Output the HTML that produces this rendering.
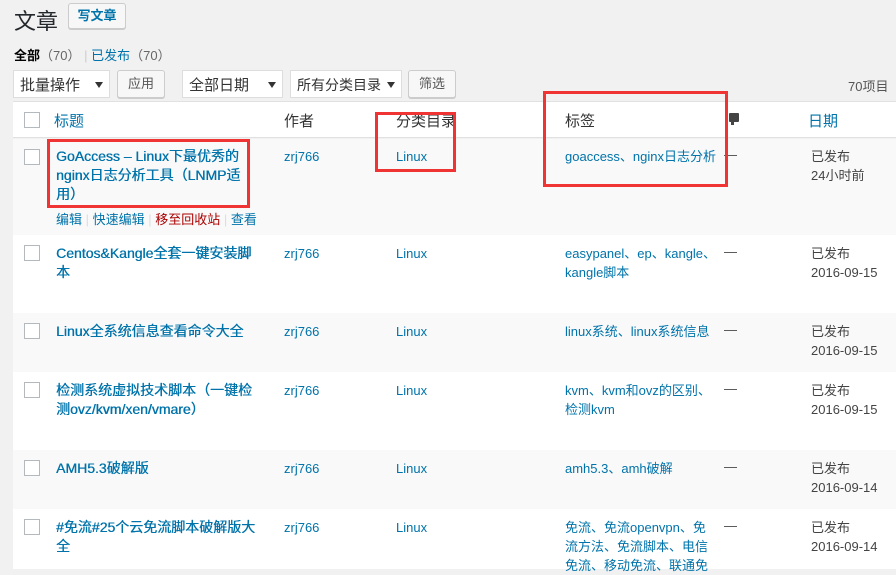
<!DOCTYPE html>
<html><head><meta charset="utf-8"><style>
*{margin:0;padding:0;box-sizing:border-box}
body{width:896px;height:567px;overflow:hidden;background:#f1f1f1;font-family:"Liberation Sans","Noto Sans CJK SC",sans-serif;font-size:13px;color:#444;position:relative}
.a{position:absolute;white-space:nowrap}
.btn{position:absolute;border:1px solid #ccc;background:#f7f7f7;border-radius:3px;font-size:13px;color:#555;text-align:center;box-shadow:0 1px 0 #ccc}
.sel{position:absolute;border:1px solid #ddd;background:#fff;font-size:15px;color:#333;padding:3px 6px;height:28px;white-space:nowrap}
.sel:after{content:"";position:absolute;right:6px;top:11px;border:4px solid transparent;border-top:6px solid #333;border-bottom:0}
.row{position:absolute;left:13px;width:883px}
.cb{position:absolute;left:24px;width:16px;height:16px;border:1px solid #b4b9be;background:#fff}
.t{position:absolute;left:56px;width:210px;font-size:14px;font-weight:normal;text-shadow:0.4px 0 0 #0073aa;color:#0073aa;line-height:19px;white-space:normal}
.au,.ca,.tg{position:absolute;color:#0073aa;font-size:13px;line-height:19px}
.au{left:284px}.ca{left:396px}.tg{left:565px;width:152px}
.dash{position:absolute;left:724px;font-size:13px;color:#444}
.dt{position:absolute;left:811px;font-size:13px;line-height:19px;color:#444}
.red{position:absolute;border:3px solid #f03434}
</style></head><body>
<div class="a" style="left:14px;top:4px;font-size:22px;color:#23282d">文章</div>
<div class="btn" style="left:68px;top:3px;width:58px;height:26px;line-height:24px;font-weight:bold;color:#0073aa;font-size:13px">写文章</div>
<div class="a" style="left:14px;top:45px;font-size:13px"><b style="color:#000">全部</b><span style="color:#666">（70）</span> <span style="color:#ccc">|</span> <span style="color:#0073aa">已发布</span><span style="color:#666">（70）</span></div>
<div class="sel" style="left:13px;top:70px;width:97px">批量操作</div>
<div class="btn" style="left:117px;top:70px;width:48px;height:28px;line-height:26px">应用</div>
<div class="sel" style="left:182px;top:70px;width:101px">全部日期</div>
<div class="sel" style="left:290px;top:70px;width:112px;font-size:14px;padding-top:4px">所有分类目录</div>
<div class="btn" style="left:408px;top:70px;width:48px;height:28px;line-height:26px">筛选</div>
<div class="a" style="left:848px;top:76px;font-size:13px;color:#555">70项目</div>

<div class="row" style="top:101px;height:37px;background:#fff;border-top:1px solid #e1e1e1;border-bottom:1px solid #e1e1e1"></div>
<div class="cb" style="top:112px"></div>
<div class="a" style="left:54px;top:110px;font-size:15px;color:#0073aa">标题</div>
<div class="a" style="left:284px;top:110px;font-size:15px;color:#333">作者</div>
<div class="a" style="left:396px;top:110px;font-size:15px;color:#333">分类目录</div>
<div class="a" style="left:565px;top:110px;font-size:15px;color:#333">标签</div>
<div class="a" style="left:729px;top:113px;width:10px;height:9px;background:#444;border-radius:1px"></div>
<div class="a" style="left:731px;top:121px;width:3px;height:4px;background:#444"></div>
<div class="a" style="left:808px;top:110px;font-size:15px;color:#0073aa">日期</div>

<div class="row" style="top:139px;height:96px;background:#f9f9f9"></div>
<div class="cb" style="top:149px"></div>
<div class="t" style="top:147px;width:195px">GoAccess – Linux下最优秀的nginx日志分析工具（LNMP适用）</div>
<div class="a" style="left:56px;top:209px;font-size:13px;color:#0073aa">编辑 <span style="color:#ddd">|</span> 快速编辑 <span style="color:#ddd">|</span> <span style="color:#a00">移至回收站</span> <span style="color:#ddd">|</span> 查看</div>
<div class="au" style="top:147px">zrj766</div><div class="ca" style="top:147px">Linux</div>
<div class="tg" style="top:147px;width:170px">goaccess、nginx日志分析</div><div class="dash" style="top:147px">—</div>
<div class="dt" style="top:147px">已发布<br>24小时前</div>

<div class="row" style="top:235px;height:78px;background:#fff"></div>
<div class="cb" style="top:245px"></div>
<div class="t" style="top:244px;width:205px">Centos&amp;Kangle全套一键安装脚本</div>
<div class="au" style="top:244px">zrj766</div><div class="ca" style="top:244px">Linux</div>
<div class="tg" style="top:244px">easypanel、ep、kangle、kangle脚本</div><div class="dash" style="top:244px">—</div>
<div class="dt" style="top:244px">已发布<br>2016-09-15</div>

<div class="row" style="top:313px;height:59px;background:#f9f9f9"></div>
<div class="cb" style="top:323px"></div>
<div class="t" style="top:322px">Linux全系统信息查看命令大全</div>
<div class="au" style="top:322px">zrj766</div><div class="ca" style="top:322px">Linux</div>
<div class="tg" style="top:322px">linux系统、linux系统信息</div><div class="dash" style="top:322px">—</div>
<div class="dt" style="top:322px">已发布<br>2016-09-15</div>

<div class="row" style="top:372px;height:78px;background:#fff"></div>
<div class="cb" style="top:382px"></div>
<div class="t" style="top:381px;width:205px">检测系统虚拟技术脚本（一键检测ovz/kvm/xen/vmare）</div>
<div class="au" style="top:381px">zrj766</div><div class="ca" style="top:381px">Linux</div>
<div class="tg" style="top:381px">kvm、kvm和ovz的区别、检测kvm</div><div class="dash" style="top:381px">—</div>
<div class="dt" style="top:381px">已发布<br>2016-09-15</div>

<div class="row" style="top:450px;height:59px;background:#f9f9f9"></div>
<div class="cb" style="top:460px"></div>
<div class="t" style="top:459px">AMH5.3破解版</div>
<div class="au" style="top:459px">zrj766</div><div class="ca" style="top:459px">Linux</div>
<div class="tg" style="top:459px">amh5.3、amh破解</div><div class="dash" style="top:459px">—</div>
<div class="dt" style="top:459px">已发布<br>2016-09-14</div>

<div class="row" style="top:509px;height:60px;background:#fff"></div>
<div class="cb" style="top:519px"></div>
<div class="t" style="top:518px;width:205px">#免流#25个云免流脚本破解版大全</div>
<div class="au" style="top:518px">zrj766</div><div class="ca" style="top:518px">Linux</div>
<div class="tg" style="top:518px;width:150px">免流、免流openvpn、免流方法、免流脚本、电信免流、移动免流、联通免</div><div class="dash" style="top:518px">—</div>
<div class="dt" style="top:518px">已发布<br>2016-09-14</div>

<div class="red" style="left:47px;top:139px;width:203px;height:69px"></div>
<div class="red" style="left:375px;top:112px;width:81px;height:60px"></div>
<div class="red" style="left:543px;top:91px;width:185px;height:96px"></div>
</body></html>
